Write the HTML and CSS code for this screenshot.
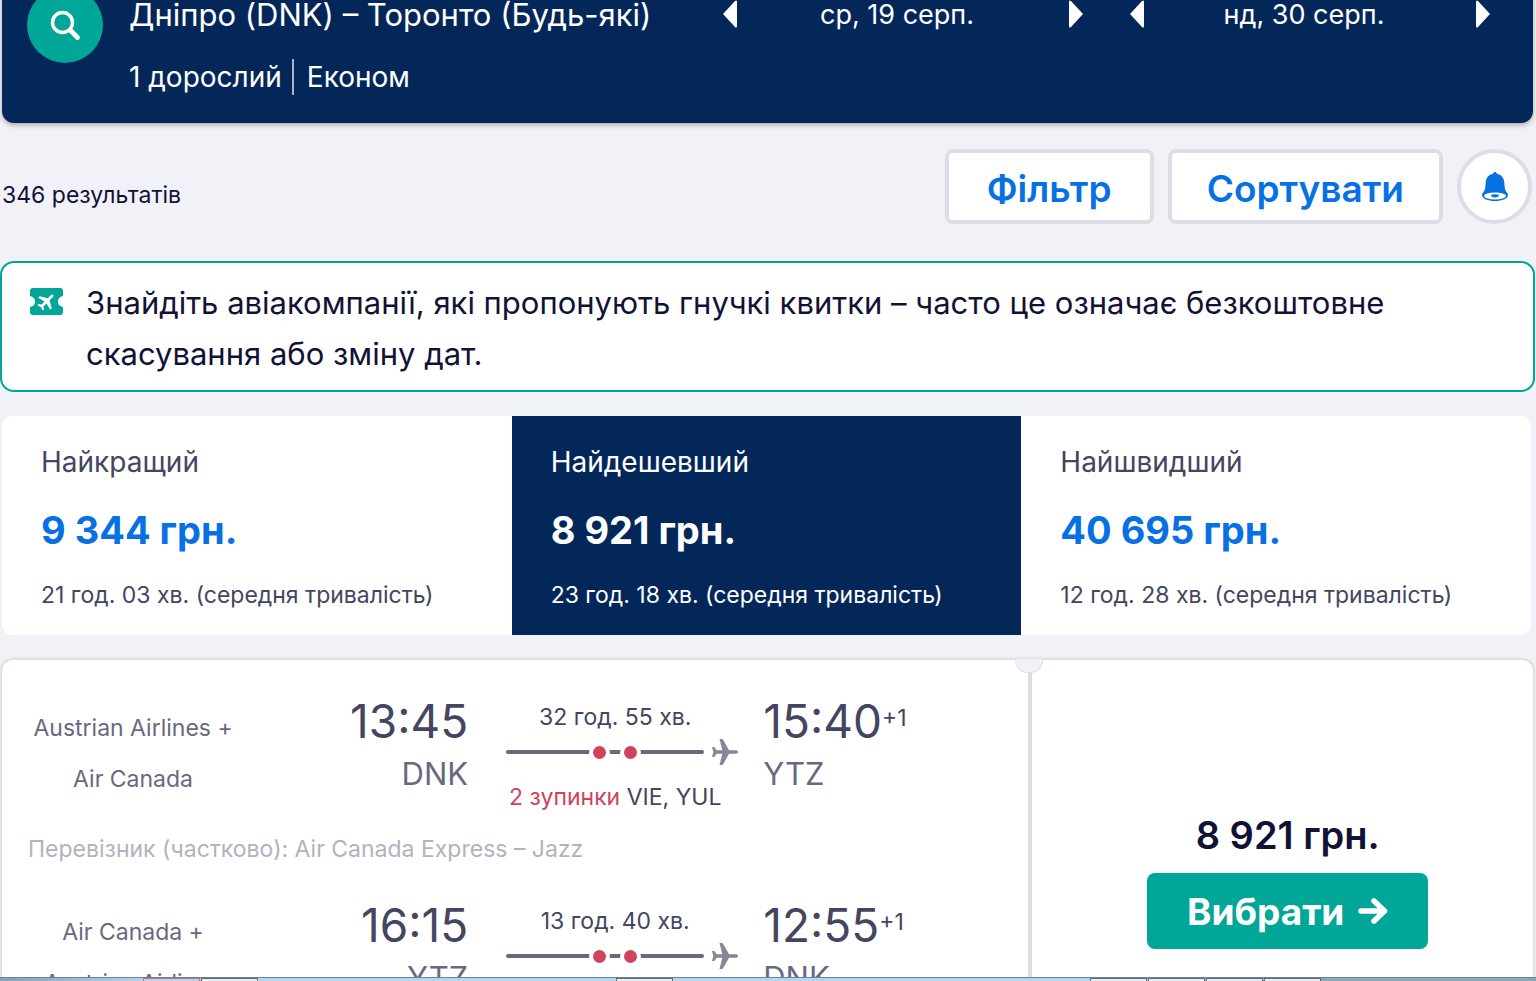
FILE: index.html
```html
<!DOCTYPE html>
<html lang="uk">
<head>
<meta charset="utf-8">
<title>Дніпро – Торонто</title>
<link rel="stylesheet" href="styles.css">
</head>
<body>
<header class="summary">
  <button class="search" aria-label="Змінити пошук">
    <svg width="32" height="32" viewBox="0 0 32 32" fill="none" stroke="currentColor" stroke-linecap="round"><circle cx="13.500" cy="13.500" r="10" stroke-width="3.400"/><path d="M21.500 21.500 28.500 28.500" stroke-width="4.800"/></svg>
  </button>
  <div class="route">
    <h1 class="places">Дніпро (DNK) – Торонто (Будь-які)</h1>
    <p class="party"><span>1 дорослий</span><span class="cabin">Економ</span></p>
  </div>
  <div class="date">
    <button class="step" aria-label="Попередній день вильоту"><svg width="14" height="28" viewBox="0 0 14 28"><path d="M0 14 12 1q2-1.500 2 1v24q0 2.500-2 1z" fill="currentColor"/></svg></button>
    <span class="day">ср, 19 серп.</span>
    <button class="step" aria-label="Наступний день вильоту"><svg width="14" height="28" viewBox="0 0 14 28"><path d="M14 14 2 1Q0-.5 0 2v24q0 2.500 2 1z" fill="currentColor"/></svg></button>
  </div>
  <div class="date">
    <button class="step" aria-label="Попередній день повернення"><svg width="14" height="28" viewBox="0 0 14 28"><path d="M0 14 12 1q2-1.500 2 1v24q0 2.500-2 1z" fill="currentColor"/></svg></button>
    <span class="day">нд, 30 серп.</span>
    <button class="step" aria-label="Наступний день повернення"><svg width="14" height="28" viewBox="0 0 14 28"><path d="M14 14 2 1Q0-.5 0 2v24q0 2.500 2 1z" fill="currentColor"/></svg></button>
  </div>
</header>

<main>
  <div class="toolbar">
    <p class="count">346 результатів</p>
    <button class="tool">Фільтр</button>
    <button class="tool">Сортувати</button>
    <button class="tool bell" aria-label="Сповіщення про ціну">
      <svg width="26" height="30" viewBox="0 0 26 30"><path d="M13 0c1 0 1.600.7 1.800 1.700C19.500 2.600 22 6 22.300 10.500c.3 4.500.5 7.500 2.200 9.600.9 1 1.500 2 1.500 3.100C26 26.500 20 29 13 29S0 26.500 0 23.200c0-1.100.6-2.100 1.500-3.100 1.700-2.100 1.900-5.100 2.200-9.600C4 6 6.500 2.600 11.200 1.700 11.400.7 12 0 13 0z" fill="currentColor"/><ellipse cx="13" cy="24" rx="11" ry="3.400" fill="#fff"/><path d="M9 22.800q4-1 8 0c0 1.800-1.600 2.700-4 2.700s-4-.9-4-2.700z" fill="currentColor"/></svg>
    </button>
  </div>

  <div class="notice">
    <svg class="ticket" width="33" height="27" viewBox="0 0 33 27"><path d="M3 0h27q3 0 3 3v5q-5 1-5 5.500t5 5.500v5q0 3-3 3H3q-3 0-3-3v-5q5-1 5-5.500T0 8V3q0-3 3-3z" fill="#00a698"/><path transform="translate(16.500 13.500) rotate(-45) scale(.78)" d="M12 0c0-1-1-1.700-2.500-1.700H4L-1.500-11h-2.600L-1.800-1.700h-5.400L-9.500-5h-2L-10.300 0l-1.200 5h2l2.300-3.300h5.400L-4.100 11h2.600L4 1.700h5.500C11 1.700 12 1 12 0z" fill="#fff"/></svg>
    <p>Знайдіть авіакомпанії, які пропонують гнучкі квитки – часто це означає безкоштовне скасування або зміну дат.</p>
  </div>

  <div class="tabs">
    <button class="tab"><span class="tab-name">Найкращий</span><span class="tab-price">9 344 грн.</span><span class="tab-time">21 год. 03 хв. (середня тривалість)</span></button>
    <button class="tab active"><span class="tab-name">Найдешевший</span><span class="tab-price">8 921 грн.</span><span class="tab-time">23 год. 18 хв. (середня тривалість)</span></button>
    <button class="tab"><span class="tab-name">Найшвидший</span><span class="tab-price">40 695 грн.</span><span class="tab-time">12 год. 28 хв. (середня тривалість)</span></button>
  </div>

  <article class="ticket-card">
    <div class="legs">
      <section class="leg">
        <p class="airline">Austrian Airlines +<br>Air Canada</p>
        <div class="depart"><p class="clock">13:45</p><p class="code">DNK</p></div>
        <div class="path">
          <p class="duration">32 год. 55 хв.</p>
          <div class="track"><span class="line"><i class="stop"></i><i class="stop"></i></span><svg width="26" height="26" viewBox="0 0 26 26"><path d="M26 13c0-1.200-1-1.800-2.500-1.800H17L11 .5C10.700.1 10.400 0 10 0H7.500l2.800 11.200H4.700L2.300 8H0l1.300 5L0 18h2.300l2.400-3.200h5.600L7.500 26H10c.4 0 .7-.1 1-.5l6-10.700h6.500c1.500 0 2.500-.6 2.500-1.800z" fill="#8b8496"/></svg></div>
          <p class="stops"><span class="red">2 зупинки</span> VIE, YUL</p>
        </div>
        <div class="arrive"><p class="clock">15:40<sup>+1</sup></p><p class="code">YTZ</p></div>
      </section>
      <p class="carrier">Перевізник (частково): Air Canada Express – Jazz</p>
      <section class="leg">
        <p class="airline">Air Canada +<br>Austrian Airlines</p>
        <div class="depart"><p class="clock">16:15</p><p class="code">YTZ</p></div>
        <div class="path">
          <p class="duration">13 год. 40 хв.</p>
          <div class="track"><span class="line"><i class="stop"></i><i class="stop"></i></span><svg width="26" height="26" viewBox="0 0 26 26"><path d="M26 13c0-1.200-1-1.800-2.500-1.800H17L11 .5C10.700.1 10.400 0 10 0H7.500l2.800 11.200H4.700L2.300 8H0l1.300 5L0 18h2.300l2.400-3.200h5.600L7.500 26H10c.4 0 .7-.1 1-.5l6-10.700h6.500c1.500 0 2.500-.6 2.500-1.800z" fill="#8b8496"/></svg></div>
        </div>
        <div class="arrive"><p class="clock">12:55<sup>+1</sup></p><p class="code">DNK</p></div>
      </section>
    </div>
    <div class="offer">
      <p class="price">8 921 грн.</p>
      <button class="select">Вибрати <svg width="30" height="26" viewBox="0 0 30 26" fill="none" stroke="currentColor" stroke-width="5.600" stroke-linecap="round" stroke-linejoin="round"><path d="M3 13h22M16 3l10.500 10L16 23"/></svg></button>
    </div>
  </article>
</main>

<div class="taskbar">
  <span class="task alert"></span><span class="task"></span><span class="task middle"></span><span class="task last"></span><span class="task"></span><span class="task"></span><span class="task"></span>
</div>
</body>
</html>
```
FILE: styles.css
```css
* { box-sizing: border-box; }
body {
  margin: 0;
  height: 100vh;
  overflow: hidden;
  background: #f1f2f8;
  color: #111236;
  font-family: Inter, "Noto Sans", sans-serif;
}
p, h1 { margin: 0; font-weight: 400; }
button { font: inherit; color: inherit; border: 0; padding: 0; background: none; cursor: pointer; }
svg { display: block; flex: none; }

/* Search summary, scrolled partly above the window */
.summary {
  display: flex;
  align-items: flex-start;
  margin: -24px 3px 0 2px;
  padding: 11px 43px 28px 25px;
  border-radius: 0 0 12px 12px;
  background: #042759;
  box-shadow: 0 2px 5px rgba(37, 32, 31, .35);
  color: #fff;
  font-size: 27px;
}
.search {
  display: flex;
  align-items: center;
  justify-content: center;
  width: 76px;
  height: 76px;
  border-radius: 50%;
  background: #00a698;
}
.route { flex: 1; padding: 6px 0 0 26px; white-space: nowrap; }
.places { font-size: 31px; line-height: 44px; }
.party { display: flex; align-items: center; height: 36px; margin-top: 22px; font-size: 28px; line-height: 36px; }
.cabin { margin-left: 10px; padding-left: 13px; border-left: 2px solid #a8b3c6; }
.date {
  display: flex;
  align-items: center;
  justify-content: space-between;
  width: 360px;
  max-width: 25%;
  height: 36px;
  margin: 9px 0 0 47px;
}
.day { padding-right: 12px; }

.toolbar { display: flex; align-items: center; gap: 14px; padding: 26px 4px 37px 2px; }
.count { flex: 1; padding-top: 16px; font-size: 23px; line-height: 30px; }
.tool {
  min-width: 209px;
  height: 75px;
  padding: 4px 35px 0;
  border: 4px solid #dddde5;
  border-radius: 8px;
  background: #fff;
  color: #0770e3;
  font-size: 37px;
  font-weight: 600;
}
.bell { display: flex; align-items: center; justify-content: center; width: 75px; min-width: 0; padding: 0; border-radius: 50%; }

.notice {
  display: flex;
  gap: 23px;
  margin-right: 1px;
  padding: 14px 60px 11px 28px;
  border: 2px solid #00a698;
  border-radius: 14px;
  background: #fff;
  font-size: 31px;
  line-height: 51px;
}
.ticket { margin-top: 11px; }

.tabs {
  display: grid;
  grid-template-columns: repeat(3, 1fr);
  margin: 24px 5px 24px 2px;
  border-radius: 10px;
  overflow: hidden;
  background: #fff;
}
.tab { display: flex; flex-direction: column; padding: 24px 10px 21px 39px; color: #444560; text-align: left; white-space: nowrap; }
.tab-name { font-size: 28px; line-height: 44px; }
.tab-price { padding: 16px 0; color: #0770e3; font-size: 38px; font-weight: 700; line-height: 60px; }
.tab-time { font-size: 23px; line-height: 38px; }
.active, .active .tab-price { background: #042759; color: #fff; }

.ticket-card {
  display: flex;
  margin: 0 2px 0 1px;
  border: 1px solid #dddde5;
  border-radius: 12px;
  background: #fff;
  box-shadow: 0 0 3px rgba(37, 32, 31, .2);
  color: #444560;
}
.legs { position: relative; width: 67.3%; padding: 31px 0 0 26px; border-right: 4px solid #dddde5; }
.legs::after {
  content: "";
  position: absolute;
  top: -1px;
  right: -15px;
  width: 26px;
  height: 13px;
  border: 1px solid #dddde5;
  border-top: 0;
  border-radius: 0 0 13px 13px;
  background: #f1f2f8;
}
.leg {
  display: grid;
  grid-template-columns: minmax(0, 42fr) minmax(0, 46fr) minmax(0, 59fr) minmax(0, 53fr);
  white-space: nowrap;
}
.airline { padding-top: 12px; color: #68697f; font-size: 23px; line-height: 51px; text-align: center; }
.depart { text-align: right; }
.clock { font-size: 46px; line-height: 60px; }
.clock sup { font-size: 23px; line-height: 24px; vertical-align: 12px; }
.code { color: #68697f; font-size: 31px; line-height: 46px; }
.path { padding: 8px 25px 0 38px; text-align: center; font-size: 23px; }
.duration { margin-right: 14px; line-height: 36px; }
.track { display: flex; align-items: center; gap: 8px; height: 34px; }
.line {
  display: flex;
  flex: 1;
  align-items: center;
  justify-content: center;
  gap: 10px;
  height: 4px;
  padding-left: 19px;
  border-radius: 2px;
  background: #68697f;
}
.stop { width: 21px; height: 21px; border: 4px solid #fff; border-radius: 50%; background: #d1435b; }
.stops { margin-right: 14px; line-height: 56px; }
.red { color: #d1435b; }
.carrier { margin-bottom: 22px; color: #b2b2bf; font-size: 23px; line-height: 48px; }
.offer { flex: 1; display: flex; flex-direction: column; align-items: center; padding: 147px 0 0 10px; }
.price { color: #111236; font-size: 38px; font-weight: 600; line-height: 56px; }
.select {
  display: flex;
  align-items: center;
  gap: 14px;
  height: 76px;
  margin-top: 10px;
  padding: 0 40px;
  border-radius: 8px;
  background: #00a698;
  color: #fff;
  font-size: 37px;
  font-weight: 700;
}

/* Desktop taskbar edge, over the page */
.taskbar {
  position: fixed;
  inset: auto 0 0;
  display: flex;
  gap: 1px;
  height: 4px;
  border-top: 1px solid #71818e;
  background: linear-gradient(90deg, #7ea3bf, #b1d7f7 10%, #b1d7f7 70%, #86a9c2 86%);
}
.task { width: 57px; border: 1px solid #626a73; border-bottom: 0; background: #e6eefa; }
.alert { margin-left: 143px; border-color: #d06a78; background: #b1d7f7; }
.middle { margin-left: 357px; }
.last { margin-left: 416px; }
```
